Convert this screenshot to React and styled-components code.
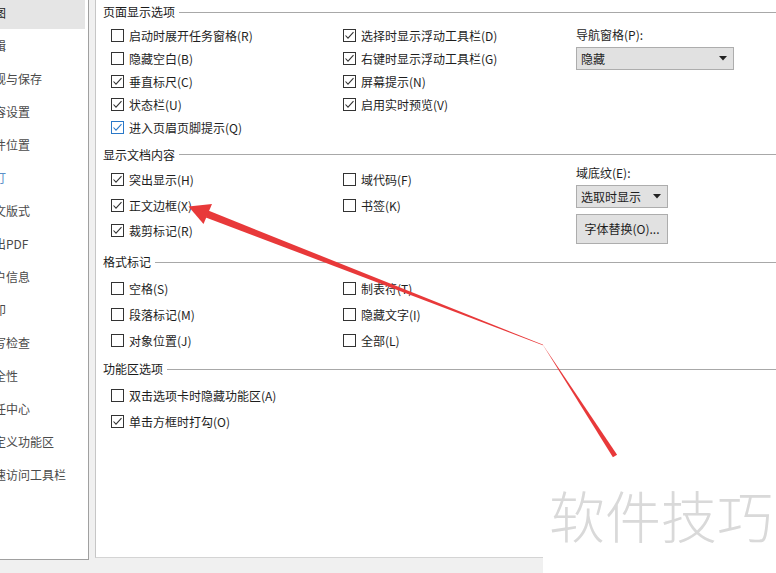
import React from "react";
import styled, { createGlobalStyle } from "styled-components";

const GlobalStyle = createGlobalStyle`
  html, body {
    margin: 0;
    padding: 0;
    background: #f0f0f0;
  }
  body {
    font-family: "Noto Sans CJK SC", "Microsoft YaHei", sans-serif;
    font-size: 12px;
    color: #1e1e1e;
  }
`;

const navItems = [
  { text: "视图", selected: true },
  { text: "编辑" },
  { text: "常规与保存" },
  { text: "兼容设置" },
  { text: "文件位置" },
  { text: "修订", hover: true },
  { text: "中文版式" },
  { text: "输出PDF" },
  { text: "用户信息" },
  { text: "打印" },
  { text: "拼写检查" },
  { text: "安全性" },
  { text: "信任中心" },
  { text: "自定义功能区" },
  { text: "快速访问工具栏" },
];

const Check = ({ checked, active }) => (
  <Box $active={active}>
    {checked && (
      <svg width="11" height="11" viewBox="0 0 11 11">
        <polyline
          points="1.5,5.5 4,8.2 9.5,2.2"
          fill="none"
          stroke={active ? "#2a78c8" : "#333"}
          strokeWidth="1.1"
        />
      </svg>
    )}
  </Box>
);

const Option = ({ label, checked, active }) => (
  <Row>
    <Check checked={checked} active={active} />
    <span>{label}</span>
  </Row>
);

const Caret = () => (
  <svg width="8" height="5" viewBox="0 0 8 5">
    <polygon points="0,0 8,0 4,4.5" fill="#222" />
  </svg>
);

const App = () => {
  return (
    <>
      <GlobalStyle />
      <Page>
        <Sidebar>
          {navItems.map((item) => (
            <NavItem key={item.text} $selected={item.selected} $hover={item.hover}>
              {item.text}
            </NavItem>
          ))}
        </Sidebar>

        <Panel>
          <Section $mt={4}>
            <Header>页面显示选项</Header>
            <Body $pt={3.5}>
              <Col $w={232} $rh={23}>
                <Option label="启动时展开任务窗格(R)" />
                <Option label="隐藏空白(B)" />
                <Option label="垂直标尺(C)" checked />
                <Option label="状态栏(U)" checked />
                <Option label="进入页眉页脚提示(Q)" checked active />
              </Col>
              <Col $w={233} $rh={23}>
                <Option label="选择时显示浮动工具栏(D)" checked />
                <Option label="右键时显示浮动工具栏(G)" checked />
                <Option label="屏幕提示(N)" checked />
                <Option label="启用实时预览(V)" checked />
              </Col>
              <SideCol $mt={3}>
                <FieldLabel>导航窗格(P):</FieldLabel>
                <Select $w={158} $h={23}>
                  <span>隐藏</span>
                  <Caret />
                </Select>
              </SideCol>
            </Body>
          </Section>

          <Section $mt={8}>
            <Header>显示文档内容</Header>
            <Body $pt={4.5}>
              <Col $w={232} $rh={25.5}>
                <Option label="突出显示(H)" checked />
                <Option label="正文边框(X)" checked />
                <Option label="裁剪标记(R)" checked />
              </Col>
              <Col $w={233} $rh={25.5}>
                <Option label="域代码(F)" />
                <Option label="书签(K)" />
              </Col>
              <SideCol $mt={-2.5}>
                <FieldLabel>域底纹(E):</FieldLabel>
                <Select $w={92} $h={23}>
                  <span>选取时显示</span>
                  <Caret />
                </Select>
                <Button>字体替换(O)...</Button>
              </SideCol>
            </Body>
          </Section>

          <Section $mt={10.5}>
            <Header>格式标记</Header>
            <Body $pt={6}>
              <Col $w={232} $rh={25.7}>
                <Option label="空格(S)" />
                <Option label="段落标记(M)" />
                <Option label="对象位置(J)" />
              </Col>
              <Col $w={233} $rh={25.7}>
                <Option label="制表符(T)" />
                <Option label="隐藏文字(I)" />
                <Option label="全部(L)" />
              </Col>
            </Body>
          </Section>

          <Section $mt={8}>
            <Header>功能区选项</Header>
            <Body $pt={5}>
              <Col $w={465} $rh={26.5}>
                <Option label="双击选项卡时隐藏功能区(A)" />
                <Option label="单击方框时打勾(O)" checked />
              </Col>
            </Body>
          </Section>
        </Panel>

        <Annotation width="776" height="573" viewBox="0 0 776 573">
          <polygon
            points="208.2,210.6 543.2,344.8 542.8,345.2 205.8,217.4"
            fill="#e8393a"
          />
          <polygon points="188.5,206.5 212,204 203.5,224" fill="#e8393a" />
          <polygon
            points="542.8,344.8 543.2,345.2 617.1,454.7 612.9,457.3"
            fill="#e8393a"
          />
        </Annotation>

        <Watermark>软件技巧</Watermark>
      </Page>
    </>
  );
};

export default App;

const Page = styled.div`
  position: relative;
  display: flex;
  align-items: flex-start;
  width: 776px;
  height: 573px;
  overflow: hidden;
`;

const Sidebar = styled.div`
  flex: none;
  width: 89px;
  height: 564px;
  margin-top: -4.5px;
  box-sizing: border-box;
  background: #ffffff;
  border-right: 1px solid #a0a0a0;
  border-bottom: 1px solid #a0a0a0;
  overflow: hidden;
`;

const NavItem = styled.div`
  width: 85px;
  height: 33px;
  line-height: 33px;
  font-size: 12px;
  white-space: nowrap;
  text-indent: -18px;
  overflow: hidden;
  color: ${(p) => (p.$selected ? "#1a1a1a" : p.$hover ? "#5b8fc8" : "#4a4a4a")};
  background: ${(p) => (p.$selected ? "#e5e5e5" : "transparent")};
`;

const Panel = styled.div`
  flex: 1;
  height: 558px;
  margin-left: 6px;
  box-sizing: border-box;
  background: #ffffff;
  border-left: 1px solid #c6c6c6;
  border-bottom: 1px solid #d4d4d4;
`;

const Section = styled.div`
  margin-top: ${(p) => p.$mt}px;
`;

const Header = styled.div`
  display: flex;
  align-items: center;
  height: 16px;
  line-height: 16px;
  padding-left: 7px;
  white-space: nowrap;
  color: #1a1a1a;

  &::after {
    content: "";
    flex: 1;
    height: 1px;
    margin-left: 4px;
    background: #a8a8a8;
  }
`;

const Body = styled.div`
  display: flex;
  padding-top: ${(p) => p.$pt}px;
  padding-left: 15px;
`;

const Col = styled.div`
  display: flex;
  flex-direction: column;
  width: ${(p) => p.$w}px;

  & > * {
    height: ${(p) => p.$rh}px;
  }
`;

const Row = styled.div`
  display: flex;
  align-items: center;
  gap: 5px;
  white-space: nowrap;
`;

const Box = styled.div`
  width: 13px;
  height: 13px;
  box-sizing: border-box;
  flex: none;
  border: 1px solid ${(p) => (p.$active ? "#2a78c8" : "#333333")};
  background: #ffffff;
  display: flex;

  svg {
    display: block;
  }
`;

const SideCol = styled.div`
  display: flex;
  flex-direction: column;
  align-items: flex-start;
  margin-top: ${(p) => p.$mt}px;
`;

const FieldLabel = styled.div`
  height: 16px;
  line-height: 16px;
  margin-bottom: 4px;
  white-space: nowrap;
`;

const Select = styled.div`
  display: flex;
  align-items: center;
  justify-content: space-between;
  width: ${(p) => p.$w}px;
  height: ${(p) => p.$h}px;
  box-sizing: border-box;
  padding: 0 6px 0 4px;
  background: #e1e1e1;
  border: 1px solid #adadad;
  white-space: nowrap;
`;

const Button = styled.div`
  display: flex;
  align-items: center;
  justify-content: center;
  width: 92px;
  height: 30px;
  margin-top: 6px;
  box-sizing: border-box;
  background: #e1e1e1;
  border: 1px solid #adadad;
  white-space: nowrap;
`;

const Annotation = styled.svg`
  position: absolute;
  left: 0;
  top: 0;
  pointer-events: none;
`;

const Watermark = styled.div`
  position: absolute;
  left: 543px;
  top: 478px;
  width: 233px;
  height: 95px;
  background: #ffffff;
  padding-left: 6px;
  box-sizing: border-box;
  font-size: 56px;
  line-height: 72px;
  font-weight: 300;
  color: #d9d9d9;
  white-space: nowrap;
`;
